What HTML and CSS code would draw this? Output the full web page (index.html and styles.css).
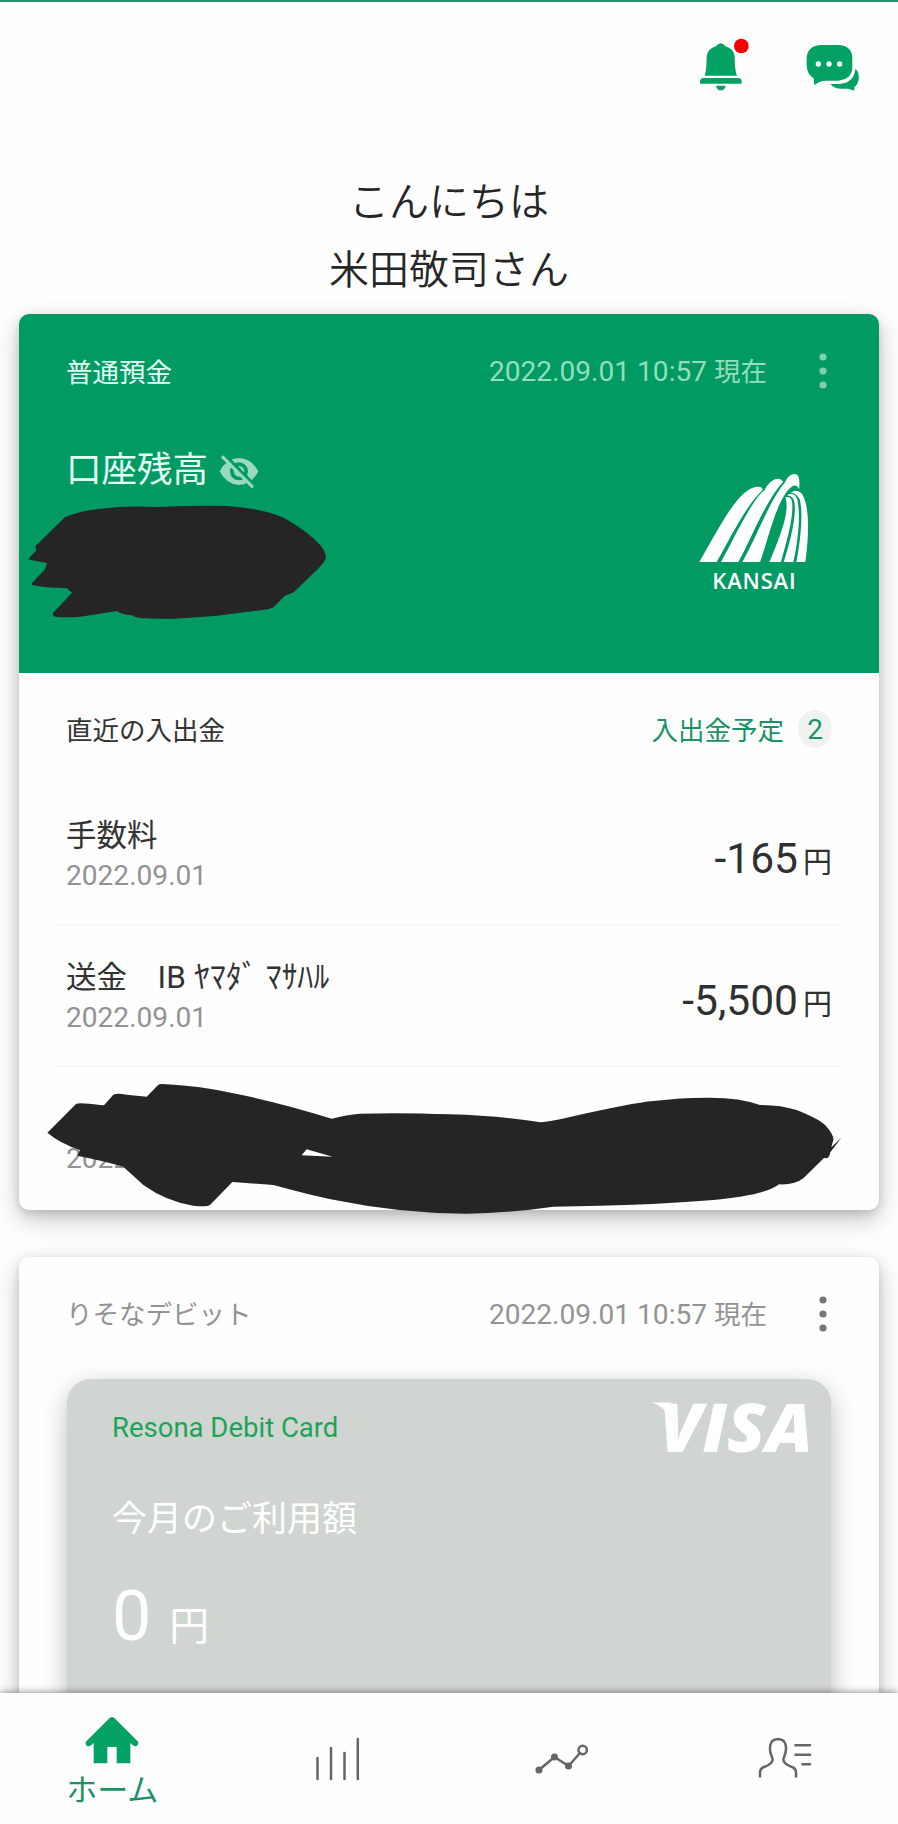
FILE: index.html
```html
<!DOCTYPE html>
<html lang="ja">
<head>
<meta charset="utf-8">
<title>ホーム</title>
<link rel="stylesheet" href="styles.css">
</head>
<body>
<div class="app">
  <header class="topbar">
    <svg class="bell" width="50" height="54" viewBox="0 0 150 162">
      <g fill="#04a164"><path d="M14 119Q20 102 20 62Q23 37 48 31Q54 22 62 22Q70 22 76 31Q101 37 104 62Q104 103 111 119Z"/><path d="M10 126H115Q125 127 125 136V143H0V136Q1 127 10 126Z"/><path d="M48 149H77Q74 163 62 163Q51 163 48 149Z"/></g>
      <circle cx="124" cy="30" r="22" fill="#f80000"/>
    </svg>
    <svg class="chat" width="54" height="48" viewBox="0 0 162 144">
      <g fill="#04a164"><path d="M43 6H100Q139 9 139 47V72Q139 108 96 113H58Q42 113 27 125Q24 125 24 121V107Q2 94 2 66V48Q2 10 43 6Z"/><path d="M148 78Q160 86 158 108Q157 123 145 132V139Q145 144 141 142L127 137H104Q81 136 74 123H95Q143 123 148 78Z"/></g>
      <g fill="#fff"><circle cx="37" cy="63" r="8"/><circle cx="69" cy="63" r="8"/><circle cx="101" cy="63" r="8"/></g>
    </svg>
  </header>
  <h1 class="greeting">こんにちは<br>米田敬司さん</h1>

  <section class="card account">
    <div class="balance">
      <div class="card-head">
        <span class="name">普通預金</span>
        <span class="stamp">2022.09.01 10:57 <span class="ja">現在</span></span>
        <svg class="more" width="8" height="36" viewBox="0 0 8 36"><circle cx="4" cy="4" r="3.6"/><circle cx="4" cy="18" r="3.6"/><circle cx="4" cy="32" r="3.6"/></svg>
      </div>
      <div class="balance-row">
        <span class="balance-title">口座残高</span>
        <svg class="eye" width="40" height="34" viewBox="0 0 120 102">
          <path fill-rule="evenodd" d="M2 49Q22 10 60 9Q98 10 118 49Q98 88 60 90Q22 88 2 49ZM60 22A27 27 0 1 0 60 76A27 27 0 1 0 60 22ZM60 33A16 16 0 1 1 60 65A16 16 0 1 1 60 33Z"/>
          <path d="M16 -2L108 92" class="gap"/><path d="M9 4L102 97" class="slash"/>
        </svg>
      </div>
      <svg class="kansai" width="130" height="140" viewBox="0 0 390 420" fill="#fff">
        <path d="M28 306C95 190 150 78 205 80Q218 81 218 90C165 140 115 245 80 306Z"/>
        <path d="M93 306C130 240 186 118 222 92Q243 54 266 56Q277 58 279 66C225 125 185 235 145 306Z"/>
        <path d="M157 306C200 230 240 120 283 70Q295 42 315 42Q333 44 327 88Q320 70 305 80C260 115 235 240 210 306Z"/>
        <path d="M238 306C275 220 300 150 286 112Q302 108 306 124C312 170 291 240 273 306Z"/>
        <path d="M281 306C302 240 322 160 312 122Q307 107 290 106Q313 94 322 118C333 170 323 250 310 306Z"/>
        <path d="M319 306C332 240 340 158 329 118Q319 99 302 98Q320 86 335 100Q367 150 346 306Z"/>
        <text x="67" y="388" textLength="250" lengthAdjust="spacing" class="kansai-name">KANSAI</text>
      </svg>
      <svg class="scribble-a" width="300" height="120" viewBox="80 608 900 360"><path d="M83 777L108 750L105 738L192 652Q230 632 300 625Q380 615 470 620Q600 614 680 617Q790 625 850 652Q920 690 960 735Q978 755 976 775Q970 790 940 818L880 876L853 887L820 920Q812 927 780 930L650 946Q500 960 420 953Q400 950 397 945Q360 942 350 932Q300 940 240 949Q190 952 165 949Q155 945 158 938L215 877L200 864Q130 862 98 855Q92 852 95 848L133 808L140 788Q110 784 83 777Z"/></svg>
    </div>
    <div class="recent-head">
      <span>直近の入出金</span>
      <span class="planned">入出金予定</span>
      <span class="count">2</span>
    </div>
    <div class="rows">
      <div class="row">
        <div class="what"><span class="title">手数料</span><span class="date">2022.09.01</span></div>
        <div class="amount">-165<span class="yen">円</span></div>
      </div>
      <div class="row">
        <div class="what"><span class="title">送金　<span class="payee">IB ﾔﾏﾀﾞ ﾏｻﾊﾙ</span></span><span class="date">2022.09.01</span></div>
        <div class="amount">-5,500<span class="yen">円</span></div>
      </div>
      <div class="row">
        <div class="what"><span class="title">&nbsp;</span><span class="date">2022</span></div>
      </div>
    </div>
    <svg class="scribble-b" width="800" height="134" viewBox="135 66 2400 402"><path fill-rule="evenodd" d="M142 218L228 132Q235 126 300 135L312 136L340 104Q350 98 380 104L440 110L475 74Q480 70 500 73Q600 78 700 100Q830 125 995 176Q1040 164 1080 161Q1200 157 1350 163Q1500 167 1622 187Q1650 184 1700 173Q1900 128 1960 123Q2050 112 2130 113Q2220 113 2280 135Q2340 135 2390 150Q2460 178 2478 198Q2502 225 2500 240L2494 262L2524 233L2491 277Q2488 294 2480 295L2472 294L2410 355Q2385 375 2337 373Q2300 405 2130 421Q1950 435 1800 437L1660 440Q1520 460 1400 461Q1200 460 1000 419Q930 405 820 375L697 366L630 435Q620 442 580 437Q500 425 430 375L370 320Q320 305 232 287L240 270Q180 250 142 218ZM920 268L905 286L998 290Z"/></svg>
  </section>

  <section class="card debit">
    <div class="card-head">
      <span class="name">りそなデビット</span>
      <span class="stamp">2022.09.01 10:57 <span class="ja">現在</span></span>
      <svg class="more" width="8" height="36" viewBox="0 0 8 36"><circle cx="4" cy="4" r="3.6"/><circle cx="4" cy="18" r="3.6"/><circle cx="4" cy="32" r="3.6"/></svg>
    </div>
    <div class="plastic">
      <div class="brand">Resona Debit Card</div>
      <svg class="visa" width="180" height="96" viewBox="0 -18 180 96" fill="#fff">
        <path d="M6 5.500H26L30 26L22 16Q16 8 6 5.500Z"/>
        <text x="14" y="54.500" textLength="154" lengthAdjust="spacingAndGlyphs" class="visa-name">VISA</text>
      </svg>
      <div class="usage">今月のご利用額</div>
      <div class="usage-sum">0<span class="yen">円</span></div>
    </div>
  </section>

  <nav class="tabs">
    <a class="tab active">
      <svg class="home" width="54" height="48" viewBox="0 0 162 144"><path fill="#04a164" d="M74 6Q81 0 88 6L158 76Q163 84 156 89Q150 93 143 87L136 81V142H95V93H67V142H26V81L19 87Q12 93 5 89Q-1 84 4 76Z"/></svg>
      <span>ホーム</span>
    </a>
    <a class="tab">
      <svg class="line-icon bars" width="48" height="46" viewBox="0 0 48 46"><path d="M4.500 21V42M18 11V42M31.500 16V42M44.800 2V42"/></svg>
    </a>
    <a class="tab">
      <svg class="line-icon trend" width="54" height="34" viewBox="0 0 54 34"><path d="M4 28L19.500 15L33.500 24L45 11"/><circle cx="4" cy="28" r="2.300" class="dot"/><circle cx="19.500" cy="15" r="2.300" class="dot"/><circle cx="33.500" cy="24" r="2.300" class="dot"/><circle cx="47.700" cy="8" r="4.200"/></svg>
    </a>
    <a class="tab">
      <svg class="line-icon person" width="54" height="42" viewBox="0 0 54 42"><path d="M2 39.500V35.500Q2 31.500 6 30Q15 26.500 14.600 22Q14 20 12.500 16Q10 2.500 20 2Q30 2.500 27.500 16Q26 20 25.400 22Q25 26.500 34 30Q38 31.500 38 35.500V39.500M37.500 8.200H52M37.500 17.700H52M44.500 27.200H52"/></svg>
    </a>
  </nav>
</div>
</body>
</html>
```
FILE: styles.css
```css
* { box-sizing: border-box; }
body { margin: 0; background: #fff; font-family: Roboto, "Noto Sans CJK JP", sans-serif; color: #333; }
svg { display: block; flex: none; overflow: visible; }
.app { position: relative; width: 898px; height: 1824px; overflow: hidden; border-top: 2px solid #28946d; background: #fefefe; }

.topbar { height: 167px; display: flex; justify-content: flex-end; padding: 34px 38px 0 0; }
.bell { margin-right: 56px; }
.chat { margin-top: 7px; }
.greeting { margin: 0; height: 145px; text-align: center; font-size: 40px; line-height: 68px; font-weight: 350; color: #262626; }

.card { position: relative; width: 860px; margin-left: 19px; border-radius: 10px; background: #fefefe; box-shadow: 0 9px 24px rgba(0,0,0,.24), 0 3px 8px rgba(0,0,0,.12); }
.card-head { display: flex; align-items: center; height: 36px; padding: 0 52px 0 47px; font-size: 26.500px; line-height: 36px; }
.card-head .name { flex: 1; }
.card-head .stamp { margin-right: 52px; font-size: 28.100px; white-space: nowrap; }
.stamp .ja { font-size: 26.500px; }

.account { height: 896px; }
.balance { position: relative; height: 359px; padding-top: 39px; border-radius: 10px 10px 0 0; background: #029a63; color: #e4fff4; }
.balance .name { padding-top: 3px; }
.balance .stamp { padding-top: 2px; color: #91dfbd; }
.balance .more { fill: #80cdb0; }
.balance-row { display: flex; align-items: center; gap: 11px; height: 48px; margin: 57px 0 0 47px; }
.balance-title { font-size: 35.500px; line-height: 48px; }
.eye { fill: #99d9bd; margin-top: 3px; }
.eye .gap { stroke: #029a63; stroke-width: 9; }
.eye .slash { stroke: #99d9bd; stroke-width: 9; }
.kansai { position: absolute; left: 671px; top: 146px; }
.kansai-name { font: 600 66px "Open Sans", sans-serif; }
.scribble-a { position: absolute; left: 7.700px; top: 188.700px; fill: #252525; }

.recent-head { display: flex; align-items: center; height: 38px; margin-top: 37px; padding: 0 47px; font-size: 26.500px; line-height: 38px; }
.recent-head span:not(.count) { padding-top: 4px; }
.planned { margin-left: auto; color: #1b9166; }
.count { width: 34px; height: 38px; margin-left: 14px; border-radius: 50%; background: #f0f2f1; color: #1b9166; text-align: center; font-size: 28px; line-height: 40px; }
.rows { margin: 36px 37px 0; }
.row { display: flex; justify-content: space-between; height: 141.700px; padding: 30px 10px 0; border-bottom: 2px solid #f7f7f7; }
.row:last-child { border-bottom: 0; }
.what { display: flex; flex-direction: column; }
.title { height: 44px; font-size: 30.500px; line-height: 44px; white-space: pre; }
.payee { font-size: 31.500px; letter-spacing: .2px; }
.date { height: 36px; font-size: 28.100px; line-height: 36px; color: #929292; }
.amount { font-size: 42.500px; line-height: 50px; padding-top: 20px; color: #303030; }
.amount .yen { font-size: 29px; margin-left: 5px; }
.scribble-b { position: absolute; left: 26px; top: 768px; fill: #252525; }

.debit { margin-top: 47px; height: 700px; padding-top: 39px; color: #939393; }
.debit .name, .debit .stamp { padding-top: 2px; }
.debit .more { fill: #777; }
.plastic { position: relative; width: 764px; height: 480px; margin: 47px 0 0 48px; padding: 31px 0 0 45px; border-radius: 24px; background: #d1d5d1; box-shadow: 0 8px 26px rgba(0,0,0,.26); color: #fff; }
.brand { height: 36px; font-size: 27.500px; line-height: 36px; color: #1da458; }
.visa { position: absolute; right: 6px; top: 0; }
.visa-name { font: italic 800 68px "Open Sans", sans-serif; }
.usage { margin-top: 50px; height: 48px; font-size: 35px; line-height: 48px; }
.usage-sum { margin-top: 27px; height: 90px; font-size: 70px; line-height: 90px; }
.usage-sum .yen { font-size: 40px; margin-left: 18px; }

.tabs { position: absolute; left: 0; right: 0; bottom: 0; height: 131px; display: flex; background: #fefefe; box-shadow: 0 -1px 7px rgba(0,0,0,.4); }
.tab { flex: 1; display: flex; flex-direction: column; align-items: center; padding-top: 23px; }
.tab span { margin-top: 5px; font-size: 31px; line-height: 44px; color: #1b9166; }
.line-icon { fill: none; stroke: #666; stroke-width: 2.500; stroke-linecap: round; stroke-linejoin: round; }
.line-icon .dot { fill: #666; }
.bars { margin: 21px 0 0; }
.trend { margin: 26px 0 0 2px; }
.person { margin: 21px 2px 0 0; }
```
